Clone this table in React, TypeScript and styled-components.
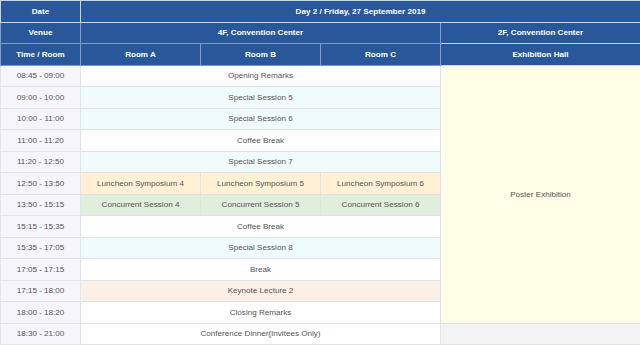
import React from "react";
import styled, { createGlobalStyle } from "styled-components";

const Global = createGlobalStyle`
  html, body { margin: 0; padding: 0; background: #fff; }
  body { font-family: "Liberation Sans", Arial, sans-serif; }
`;

const Table = styled.table`
  width: 640px;
  border-collapse: collapse;
  table-layout: fixed;
  font-family: "Liberation Sans", Arial, sans-serif;
  font-size: 8.1px;
  border: 1px solid #dcdcdc;
`;

const Row = styled.tr`
  height: 21.5px;
`;

const Head = styled.th<{ $line?: string }>`
  background: #28579a;
  color: #fff;
  font-weight: bold;
  text-align: center;
  padding: 0 4px;
  border: 1px solid ${(p) => p.$line ?? "#7f9cc6"};
  white-space: nowrap;
`;

const Time = styled.td`
  background: #f6f6fa;
  color: #555;
  text-align: center;
  padding: 0 4px;
  border: 1px solid #e4e4e8;
  white-space: nowrap;
`;

const Cell = styled.td<{ $bg?: string }>`
  background: ${(p) => p.$bg ?? "#fff"};
  color: #555;
  text-align: center;
  padding: 0 4px;
  border: 1px solid #e2e2e2;
  white-space: nowrap;
`;

const BG = {
  white: "#ffffff",
  cyan: "#f0fbfc",
  lunch: "#fff0d6",
  green: "#e1eedd",
  keynote: "#fcefe6",
  poster: "#fffee6",
  gray: "#f3f3f3",
};

type Item = { time: string; cells: string[]; bg: string };

const rows: Item[] = [
  { time: "08:45 - 09:00", cells: ["Opening Remarks"], bg: BG.white },
  { time: "09:00 - 10:00", cells: ["Special Session 5"], bg: BG.cyan },
  { time: "10:00 - 11:00", cells: ["Special Session 6"], bg: BG.cyan },
  { time: "11:00 - 11:20", cells: ["Coffee Break"], bg: BG.white },
  { time: "11:20 - 12:50", cells: ["Special Session 7"], bg: BG.cyan },
  {
    time: "12:50 - 13:50",
    cells: ["Luncheon Symposium 4", "Luncheon Symposium 5", "Luncheon Symposium 6"],
    bg: BG.lunch,
  },
  {
    time: "13:50 - 15:15",
    cells: ["Concurrent Session 4", "Concurrent Session 5", "Concurrent Session 6"],
    bg: BG.green,
  },
  { time: "15:15 - 15:35", cells: ["Coffee Break"], bg: BG.white },
  { time: "15:35 - 17:05", cells: ["Special Session 8"], bg: BG.cyan },
  { time: "17:05 - 17:15", cells: ["Break"], bg: BG.white },
  { time: "17:15 - 18:00", cells: ["Keynote Lecture 2"], bg: BG.keynote },
  { time: "18:00 - 18:20", cells: ["Closing Remarks"], bg: BG.white },
  { time: "18:30 - 21:00", cells: ["Conference Dinner(Invitees Only)"], bg: BG.white },
];

export default function App() {
  return (
    <>
      <Global />
      <Table>
        <colgroup>
          <col style={{ width: 80 }} />
          <col style={{ width: 120 }} />
          <col style={{ width: 120 }} />
          <col style={{ width: 120 }} />
          <col style={{ width: 200 }} />
        </colgroup>
        <thead>
          <Row>
            <Head $line="#c9d4e6">Date</Head>
            <Head $line="#c9d4e6" colSpan={4}>
              Day 2 / Friday, 27 September 2019
            </Head>
          </Row>
          <Row>
            <Head>Venue</Head>
            <Head colSpan={3}>4F, Convention Center</Head>
            <Head $line="#c9d4e6">2F, Convention Center</Head>
          </Row>
          <Row>
            <Head>Time / Room</Head>
            <Head>Room A</Head>
            <Head>Room B</Head>
            <Head>Room C</Head>
            <Head $line="#c9d4e6">Exhibition Hall</Head>
          </Row>
        </thead>
        <tbody>
          {rows.map((r, i) => (
            <Row key={r.time}>
              <Time>{r.time}</Time>
              {r.cells.length === 1 ? (
                <Cell $bg={r.bg} colSpan={3}>
                  {r.cells[0]}
                </Cell>
              ) : (
                r.cells.map((c) => (
                  <Cell key={c} $bg={r.bg}>
                    {c}
                  </Cell>
                ))
              )}
              {i === 0 && (
                <Cell $bg={BG.poster} rowSpan={12}>
                  Poster Exhibition
                </Cell>
              )}
              {i === 12 && <Cell $bg={BG.gray} />}
            </Row>
          ))}
        </tbody>
      </Table>
    </>
  );
}
